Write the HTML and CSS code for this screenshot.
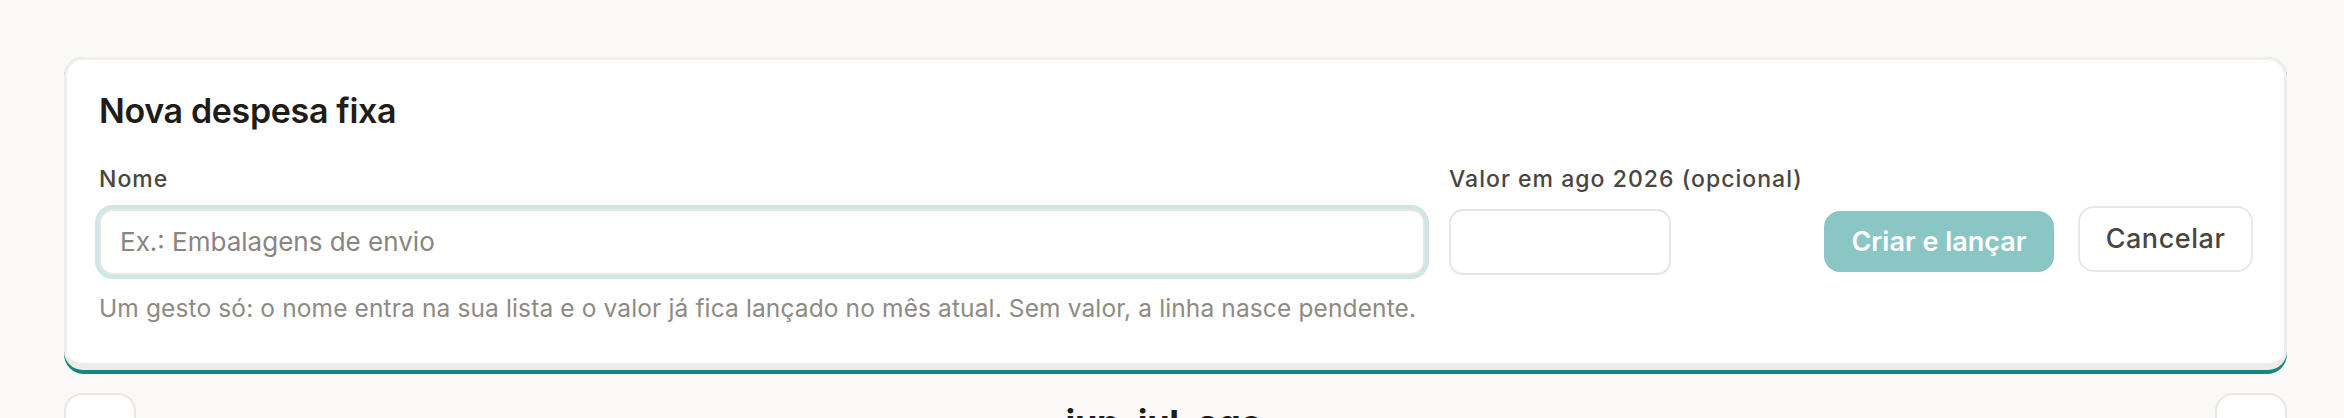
FILE: index.html
```html
<!DOCTYPE html>
<html lang="pt">
<head>
<meta charset="utf-8">
<title>Nova despesa fixa</title>
<link rel="stylesheet" href="styles.css">
</head>
<body>
<main class="page">
  <div class="card-wrap">
    <section class="card">
      <h2 class="card-title">Nova despesa fixa</h2>
      <div class="form-grid">
        <label class="label" for="nome">Nome</label>
        <label class="label" for="valor">Valor em ago 2026 (opcional)</label>
        <span></span>
        <input id="nome" class="input input-focus" type="text" placeholder="Ex.: Embalagens de envio">
        <input id="valor" class="input" type="text">
        <div class="actions">
          <button class="btn btn-primary" type="button">Criar e lançar</button>
          <button class="btn btn-ghost" type="button">Cancelar</button>
        </div>
        <p class="hint">Um gesto só: o nome entra na sua lista e o valor já fica lançado no mês atual. Sem valor, a linha nasce pendente.</p>
      </div>
    </section>
  </div>
  <nav class="month-nav">
    <button class="nav-btn" type="button" aria-label="Anterior">
      <svg viewBox="0 0 24 24" width="22" height="22"><path d="M15 5l-7 7 7 7" fill="none" stroke="#3a3632" stroke-width="2.4" stroke-linecap="round" stroke-linejoin="round"/></svg>
    </button>
    <div class="month-title">jun, jul, ago <span class="month-caret">⌄</span></div>
    <button class="nav-btn" type="button" aria-label="Próximo">
      <svg viewBox="0 0 24 24" width="22" height="22"><path d="M9 5l7 7-7 7" fill="none" stroke="#3a3632" stroke-width="2.4" stroke-linecap="round" stroke-linejoin="round"/></svg>
    </button>
  </nav>
</main>
</body>
</html>
```

FILE: styles.css
```css
* { box-sizing: border-box; }

html, body {
  margin: 0;
  padding: 0;
  background: #faf9f7;
  font-family: Inter, "Noto Sans", "Liberation Sans", sans-serif;
  overflow: hidden;
}

.page {
  padding: 57px 57px 0 64px;
}

.card-wrap {
  background: #13887f;
  border-radius: 20px;
  padding-bottom: 4px;
}

.card {
  background: #ffffff;
  border: 3px solid #f1efec;
  border-bottom: 7px solid #eeebe8;
  border-radius: 19px;
  padding: 31px 31px 40px 32px;
}

.card-title {
  margin: 0 0 35px 0;
  font-size: 34px;
  line-height: 40px;
  font-weight: 600;
  color: #1f1c1a;
  letter-spacing: -0.01em;
}

.form-grid {
  display: grid;
  grid-template-columns: minmax(0, 1fr) 222px 558px;
  column-gap: 24px;
  align-items: center;
}

.label {
  font-size: 23px;
  line-height: 26px;
  font-weight: 500;
  color: #4a4541;
  letter-spacing: 0.045em;
  margin-bottom: 14px;
  white-space: nowrap;
}

.input {
  height: 66px;
  width: 100%;
  min-width: 0;
  border: 2px solid #e9e5e1;
  border-radius: 14px;
  background: #ffffff;
  font-family: inherit;
  font-size: 26px;
  color: #2a2623;
  padding: 0 19px;
  outline: none;
}

.input::placeholder {
  color: #8a8580;
}

.input-focus {
  box-shadow: 0 0 0 4px #cde6e6;
}

.actions {
  display: flex;
  justify-content: flex-end;
  align-items: flex-end;
  gap: 24px;
  align-self: end;
  padding-bottom: 5px;
}

.btn {
  font-family: inherit;
  font-size: 27px;
  line-height: 30px;
  border-radius: 16px;
  cursor: pointer;
  padding: 0;
}

.btn-primary {
  height: 61px;
  width: 230px;
  background: #8ac6c3;
  color: #ffffff;
  border: none;
  font-weight: 600;
}

.btn-ghost {
  height: 66px;
  width: 175px;
  background: #ffffff;
  color: #4a4540;
  border: 2px solid #ebe7e3;
  font-weight: 500;
  letter-spacing: 0.02em;
}

.hint {
  grid-column: 1 / 2;
  min-width: 0;
  margin: 16px 0 0 0;
  font-size: 24.5px;
  line-height: 30px;
  color: #8f8a84;
  letter-spacing: 0.005em;
  white-space: nowrap;
  overflow: visible;
}

.month-nav {
  display: flex;
  justify-content: space-between;
  align-items: center;
  margin-top: 19px;
}

.nav-btn {
  width: 72px;
  height: 66px;
  border: 2px solid #ebe7e3;
  border-radius: 18px;
  background: #ffffff;
  display: flex;
  align-items: center;
  justify-content: center;
  padding: 0;
}

.month-title {
  font-size: 36px;
  line-height: 44px;
  font-weight: 700;
  color: #1f1c1a;
  letter-spacing: -0.01em;
}

.month-caret {
  font-size: 20px;
  color: #a9a49f;
  font-weight: 400;
}
```
